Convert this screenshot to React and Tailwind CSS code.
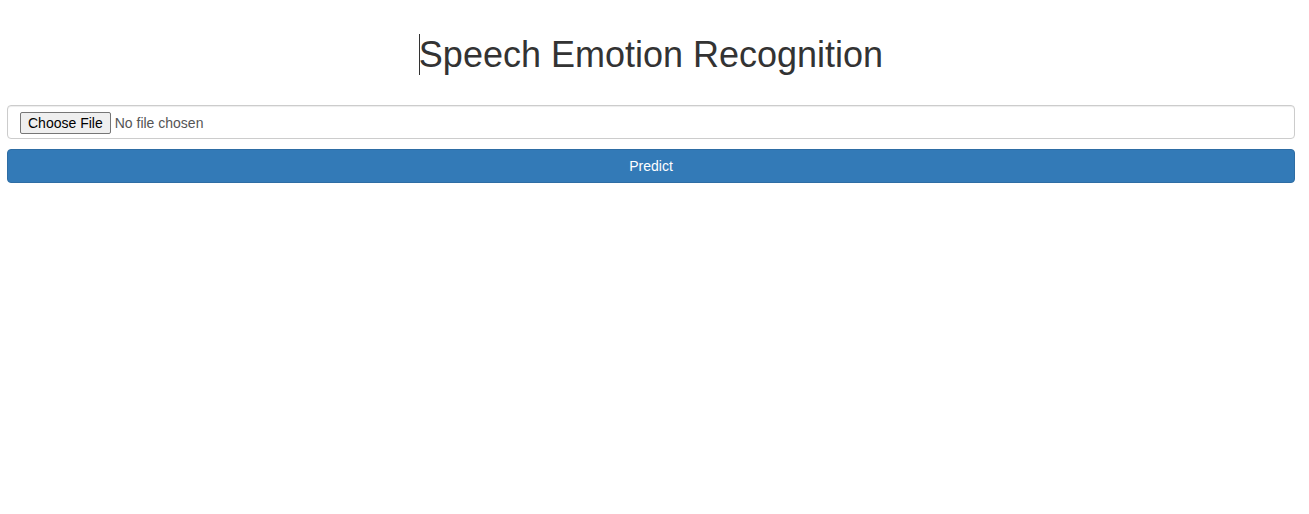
export default function App() {
  return (
    <div className="min-h-screen bg-white pl-[7px] pr-[14px] pt-[34px] text-[#333]" style={{ fontFamily: '"Liberation Sans", Arial, sans-serif' }}>
      {/* Title */}
      <h1 className="flex h-[41px] items-center justify-center text-[36px] leading-[41px] font-normal">
        <span className="mr-[-1px] inline-block h-[41px] w-px bg-[#333]" />
        <span>Speech Emotion Recognition</span>
      </h1>

      <form className="mt-[30px] flex flex-col gap-[10px]" onSubmit={(e) => e.preventDefault()}>
        {/* File input */}
        <div className="flex h-[34px] items-center rounded-[4px] border border-[#ccc] bg-white px-[12px] shadow-[inset_0_1px_1px_rgba(0,0,0,0.075)]">
          <label className="mt-[2px] flex items-center text-[14px] text-[#555]">
            <span className="flex h-[22px] items-center rounded-[2px] border border-[#767676] bg-[#efefef] px-[7px] text-[14px] text-black">
              Choose File
            </span>
            <span className="ml-[4px]">No file chosen</span>
            <input type="file" className="hidden" />
          </label>
        </div>

        {/* Predict */}
        <button
          type="submit"
          className="h-[34px] w-full rounded-[4px] border border-[#2e6da4] bg-[#337ab7] text-[14px] text-white"
        >
          Predict
        </button>
      </form>
    </div>
  )
}
